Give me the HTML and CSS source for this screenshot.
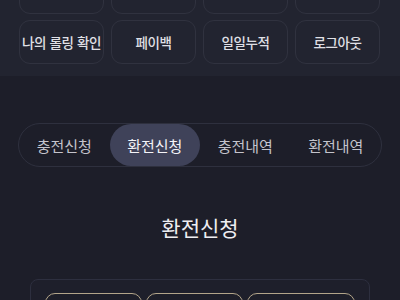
FILE: index.html
```html
<!DOCTYPE html>
<html lang="ko">
<head>
<meta charset="utf-8">
<link rel="stylesheet" href="styles.css">
</head>
<body>
<header class="top">
  <div class="menu-grid">
    <a class="menu-btn"></a>
    <a class="menu-btn"></a>
    <a class="menu-btn"></a>
    <a class="menu-btn"></a>
    <a class="menu-btn">나의 롤링 확인</a>
    <a class="menu-btn">페이백</a>
    <a class="menu-btn">일일누적</a>
    <a class="menu-btn">로그아웃</a>
  </div>
</header>
<main class="content">
  <nav class="tabs">
    <a class="tab">충전신청</a>
    <a class="tab active">환전신청</a>
    <a class="tab">충전내역</a>
    <a class="tab">환전내역</a>
  </nav>
  <h1 class="title">환전신청</h1>
  <section class="panel">
    <div class="amounts">
      <button class="amt a1"></button>
      <button class="amt a2"></button>
      <button class="amt a3"></button>
    </div>
  </section>
</main>
</body>
</html>
```
FILE: styles.css
```css
* { box-sizing: border-box; }
html, body {
  margin: 0;
  padding: 0;
  background: #1d1e29;
  font-family: "Noto Sans CJK KR", "Noto Sans", sans-serif;
  color: #dcdce4;
  overflow: hidden;
}
.top {
  background: #222430;
  padding: 0 19px 13px 19px;
  height: 76px;
  overflow: hidden;
}
.menu-grid {
  display: grid;
  grid-template-columns: repeat(4, 85px);
  column-gap: 7px;
  row-gap: 6px;
  margin-top: -30px;
}
.menu-btn {
  height: 44px;
  border: 1px solid #30323f;
  border-radius: 11px;
  display: flex;
  align-items: center;
  justify-content: center;
  font-size: 13.5px;
  font-weight: 500;
  letter-spacing: -0.4px;
  white-space: nowrap;
  color: #e0e0e6;
}
.content {
  padding: 47px 18px 0 18px;
}
.tabs {
  display: flex;
  height: 44px;
  border: 1px solid #2e303e;
  border-radius: 22px;
  padding: 0;
}
.tab {
  flex: 1;
  display: flex;
  align-items: center;
  justify-content: center;
  font-size: 15px;
  color: #c4c4cc;
  border-radius: 21px;
}
.tab.active {
  background: #3f4259;
  color: #f4f4f8;
}
.title {
  margin: 45px 0 0 0;
  text-align: center;
  font-size: 21px;
  font-weight: 400;
  line-height: 30px;
  color: #eeeef2;
}
.panel {
  margin: 37px 12px 0 12px;
  border: 1px solid #2d2f3f;
  border-radius: 8px;
  background: #1e1f2b;
  padding: 13px 14px 14px 14px;
}
.amounts {
  display: flex;
  gap: 4px;
}
.amt {
  height: 44px;
  border: 1px solid #b3a58a;
  border-radius: 10px;
  background: #1d1e29;
}
.a1, .a2 { width: 97px; }
.a3 { width: 108px; }
```
